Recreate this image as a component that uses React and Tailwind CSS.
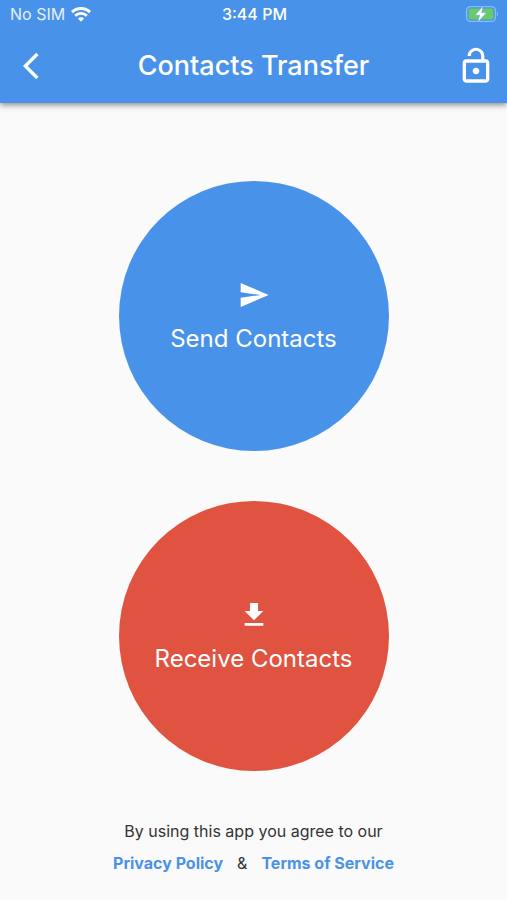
import React from 'react';
import { MdArrowBackIos, MdLockOpen, MdSend, MdFileDownload } from 'react-icons/md';

const WifiIcon = () => (
    <svg width="20" height="15" viewBox="0 0 20 15" fill="none" stroke="white" strokeWidth="2.9" aria-hidden="true">
        <path d="M1 5.1a13 13 0 0 1 18 0" />
        <path d="M4.2 8.7a8.4 8.4 0 0 1 11.6 0" />
        <path d="M10 14.8 6.9 11.6a4.4 4.4 0 0 1 6.2 0z" fill="white" stroke="none" />
    </svg>
);

const BatteryIcon = () => (
    <svg width="34" height="18" viewBox="0 0 34 18" aria-hidden="true">
        <rect x="1.6" y="1.6" width="28.8" height="14.8" rx="4" fill="none" stroke="#8dbcf3" strokeWidth="1.3" />
        <rect x="3.6" y="3.6" width="24.8" height="10.8" rx="2.2" fill="#67cb67" />
        <path d="M31.8 6.8c1.6.5 1.6 3.9 0 4.4z" fill="#8dbcf3" />
        <path d="M18.4.8 9.8 10.2h4.8L12.6 17.4l9.2-9.8h-5z" fill="white" stroke="#4992ea" strokeWidth="0.5" />
    </svg>
);

const StatusBar = () => (
    <div className="grid h-7 grid-cols-3 items-center pl-[10px] pr-2 text-base">
        <div className="flex items-center gap-[6px] text-white/85">
            <span>No SIM</span>
            <WifiIcon />
        </div>
        <span className="text-center font-medium">3:44 PM</span>
        <div className="flex justify-end">
            <BatteryIcon />
        </div>
    </div>
);

const Header = () => (
    <header className="bg-[#4992ea] text-white shadow-[0_2px_6px_rgba(0,0,0,0.45)]">
        <StatusBar />
        <div className="grid h-[75px] grid-cols-[1fr_auto_1fr] items-center px-[11px]">
            <button type="button" aria-label="Back" className="flex w-12 pl-3">
                <MdArrowBackIos size={32} />
            </button>
            <h1 className="text-[27px] leading-10 font-medium">Contacts Transfer</h1>
            <button type="button" aria-label="Unlock" className="flex justify-self-end">
                <MdLockOpen size={40} />
            </button>
        </div>
    </header>
);

const CircleButton = ({ icon: Icon, label, color }) => (
    <button
        type="button"
        className={`flex size-[270px] flex-col items-center justify-center gap-3 rounded-full pt-[2px] text-2xl text-white ${color}`}
    >
        <Icon size={32} />
        <span>{label}</span>
    </button>
);

const Footer = () => (
    <footer className="flex flex-col items-center gap-2 pb-[25px] text-base text-[#333333]">
        <p>By using this app you agree to our</p>
        <p className="flex gap-[14px]">
            <a href="#privacy" className="font-bold text-[#4992ea]">Privacy Policy</a>
            <span>&amp;</span>
            <a href="#terms" className="font-bold text-[#4992ea]">Terms of Service</a>
        </p>
    </footer>
);

const App = () => {
    return (
        <div className="flex min-h-screen flex-col bg-[#fafafa] font-['Inter',sans-serif]">
            <Header />
            <main className="flex grow flex-col items-center gap-[50px] pt-[78px] pb-12">
                <CircleButton icon={MdSend} label="Send Contacts" color="bg-[#4992ea]" />
                <CircleButton icon={MdFileDownload} label="Receive Contacts" color="bg-[#e05340]" />
            </main>
            <Footer />
        </div>
    );
};

export default App;
